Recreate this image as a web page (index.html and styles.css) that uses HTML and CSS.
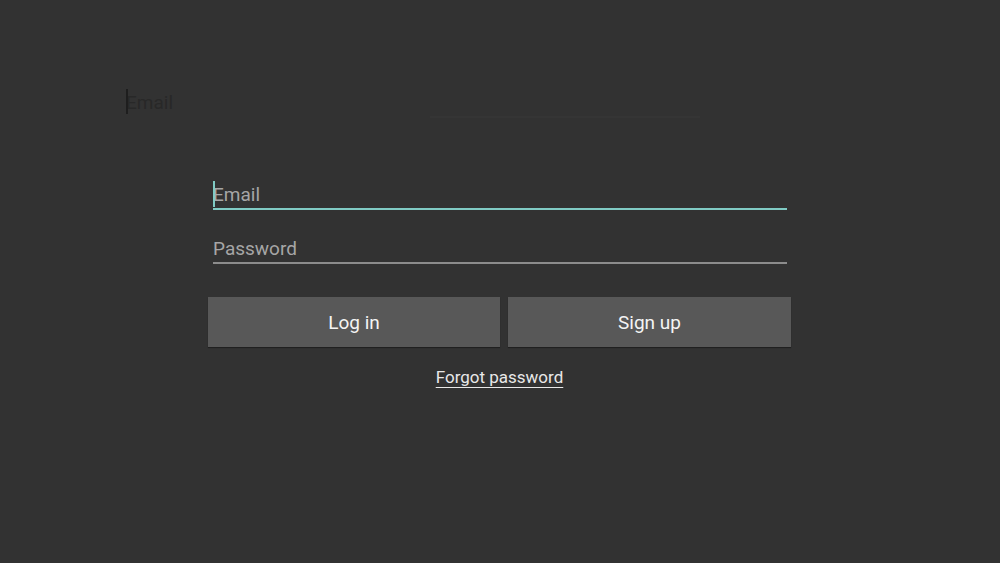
FILE: index.html
```html
<!DOCTYPE html>
<html lang="en">
<head>
<meta charset="utf-8">
<title>Log in</title>
<link rel="stylesheet" href="styles.css">
</head>
<body>
<div class="page">
  <div class="ghost-row">
    <span class="ghost-text">Email</span>
    <span class="ghost-line"></span>
  </div>
  <form class="form">
    <div class="field field-active"><span class="placeholder">Email</span></div>
    <div class="field"><span class="placeholder">Password</span></div>
    <div class="buttons">
      <button type="button" class="btn">Log in</button>
      <button type="button" class="btn">Sign up</button>
    </div>
    <div class="forgot-row"><a class="forgot" href="#">Forgot password</a></div>
  </form>
</div>
</body>
</html>
```
FILE: styles.css
```css
html, body {
  margin: 0;
  padding: 0;
  background: #323232;
  height: 100%;
}
body {
  font-family: Roboto, "Liberation Sans", sans-serif;
  overflow: hidden;
}
.page {
  display: flex;
  flex-direction: column;
}
.ghost-row {
  display: flex;
  align-items: flex-end;
  width: 574px;
  margin-top: 91px;
  padding-left: 126px;
  height: 27px;
}
.ghost-text {
  position: relative;
  font-size: 19px;
  line-height: 22px;
  color: #282828;
  margin-bottom: 4px;
}
.ghost-text::before {
  content: "";
  position: absolute;
  left: 0;
  top: -3px;
  width: 2px;
  height: 25px;
  background: #1e1e1e;
}
.ghost-line {
  margin-left: auto;
  width: 270px;
  height: 2px;
  background: #353535;
}
.form {
  margin: 62px 0 0 208px;
  width: 583px;
  display: flex;
  flex-direction: column;
}
.field {
  position: relative;
  margin: 0 4px 0 5px;
  padding-top: 2px;
  height: 26px;
  line-height: 26px;
  font-size: 19px;
  border-bottom: 2px solid #8c8c8c;
}
.field + .field {
  margin-top: 24px;
}
.field-active {
  border-bottom-color: #80cbc4;
}
.field-active::before {
  content: "";
  position: absolute;
  left: 0;
  top: 1px;
  width: 2px;
  height: 26px;
  background: #80cbc4;
}
.placeholder {
  color: #a6a6a6;
}
.buttons {
  display: grid;
  grid-template-columns: 292px 283px;
  column-gap: 8px;
  margin-top: 33px;
}
.btn {
  height: 50px;
  border: none;
  background: #585858;
  color: #f4f4f4;
  font-family: Roboto, "Liberation Sans", sans-serif;
  font-size: 19px;
  box-shadow: 0 1px 1px rgba(0, 0, 0, 0.35);
  padding: 0;
}
.forgot-row {
  margin-top: 20px;
  display: flex;
  justify-content: center;
  line-height: 20px;
}
.forgot {
  color: #e8e8e8;
  font-size: 17px;
  text-decoration: underline;
  text-underline-offset: 4px;
}
```
